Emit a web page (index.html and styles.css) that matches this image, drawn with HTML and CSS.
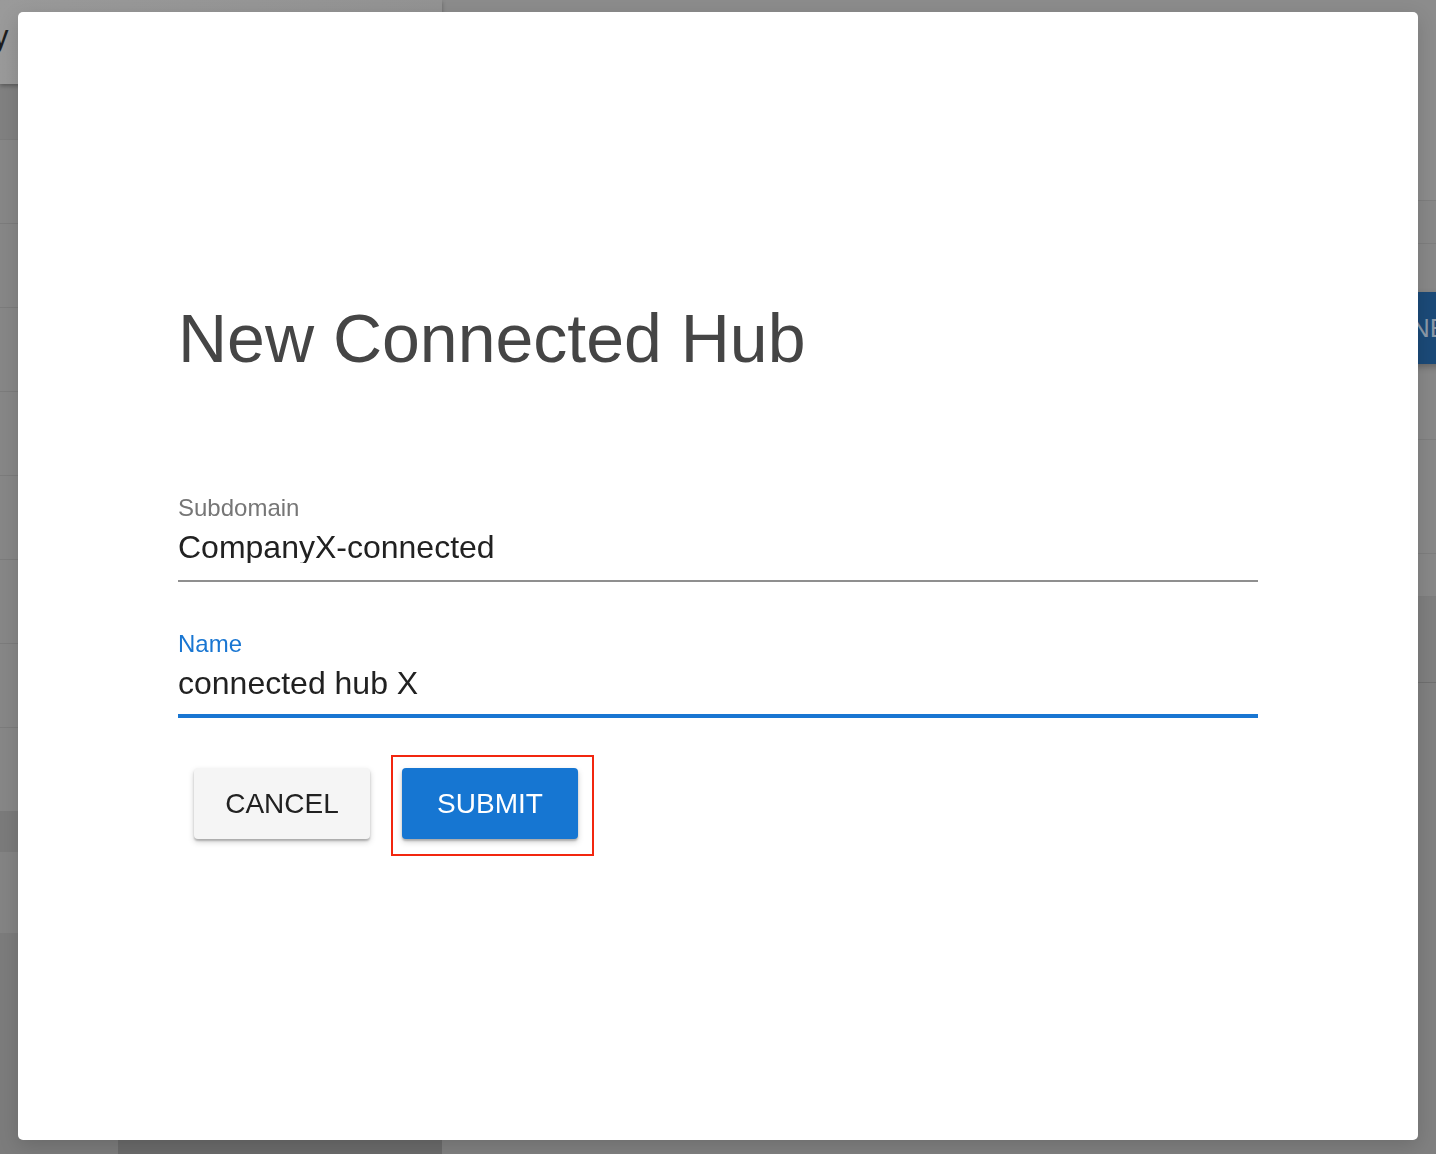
FILE: index.html
```html
<!DOCTYPE html>
<html lang="en">
<head>
  <meta charset="UTF-8">
  <title>New Connected Hub</title>
  <link rel="stylesheet" href="styles.css">
</head>
<body>

  <!-- page behind the dialog (already dimmed) -->
  <div class="page">
    <aside class="sidebar">
      <div class="sidebar-bar"><span class="sidebar-title">y</span></div>
      <div class="sidebar-head"></div>
      <div class="sidebar-row"></div>
      <div class="sidebar-row"></div>
      <div class="sidebar-row"></div>
      <div class="sidebar-row"></div>
      <div class="sidebar-row"></div>
      <div class="sidebar-row"></div>
      <div class="sidebar-row"></div>
      <div class="sidebar-row"></div>
      <div class="sidebar-band"></div>
      <div class="sidebar-band light"></div>
    </aside>

    <main class="content">
      <div class="content-top"></div>
      <div class="content-row"></div>
      <div class="content-actions">
        <button class="new-btn">NEW HUB</button>
      </div>
      <div class="content-row tall"></div>
      <div class="content-row"></div>
      <div class="content-row dark"></div>
    </main>
  </div>

  <!-- ✅ Dialog -->
  <div class="backdrop">
    <div class="dialog">
      <h1 class="dialog-title">New Connected Hub</h1>

      <form class="dialog-form">
        <label class="field">
          <span class="field-label">Subdomain</span>
          <input class="field-input" type="text" value="CompanyX-connected">
        </label>

        <label class="field is-focused">
          <span class="field-label">Name</span>
          <input class="field-input" type="text" value="connected hub X">
        </label>

        <div class="dialog-actions">
          <button type="button" class="btn btn-cancel">CANCEL</button>
          <button type="button" class="btn btn-submit">SUBMIT</button>
        </div>
      </form>
    </div>
  </div>

</body>
</html>
```

FILE: styles.css
```css
body {
  margin: 0;
  height: 100vh;
  overflow: hidden;
  font-family: "Liberation Sans", Helvetica, Arial, sans-serif;
  background: #8a8a8a;
}

/* ===== Page behind the dialog ===== */
.page {
  display: flex;
  height: 100%;
}

.sidebar {
  width: 442px;
  flex-shrink: 0;
  display: flex;
  flex-direction: column;
  background: linear-gradient(to right, #7c7c7c 118px, #6b6b6b 118px);
}

.sidebar-bar {
  height: 84px;
  background: linear-gradient(to right, #9a9a9a, #939393);
  box-shadow: 0 2px 4px rgba(0, 0, 0, 0.3);
  position: relative;
  z-index: 1;
}

.sidebar-title {
  display: block;
  margin-left: -7px;
  padding-top: 21px;
  font-size: 31px;
  line-height: 31px;
  color: #1e1e1e;
}

.sidebar-head {
  height: 55px;
  background: #818181;
}

.sidebar-row {
  height: 83px;
  background: #878787;
  border-top: 1px solid #7c7c7c;
}

.sidebar-band {
  height: 41px;
  background: #7b7b7b;
}

.sidebar-band.light {
  height: 81px;
  background: #848484;
}

.content {
  flex: 1;
  display: flex;
  flex-direction: column;
  background: #808080;
}

.content-top {
  height: 200px;
  background: #8c8c8c;
}

.content-row {
  height: 42px;
  border-top: 1px solid #7e7e7e;
  background: #888888;
}

.content-row.tall {
  height: 113px;
}

.content-row.dark {
  height: 85px;
  background: #7f7f7f;
  border-bottom: 1px solid #6f6f6f;
}

.content-actions {
  height: 195px;
  display: flex;
  justify-content: flex-end;
  background: #888888;
  border-top: 1px solid #7e7e7e;
}

.new-btn {
  width: 200px;
  height: 72px;
  margin-top: 48px;
  margin-right: -144px;
  padding: 0 0 0 31px;
  border: 0;
  border-radius: 4px;
  text-align: left;
  font-family: inherit;
  font-size: 26px;
  color: #8c9aa9;
  background: #1b4a78;
  box-shadow: 0 3px 6px rgba(0, 0, 0, 0.25);
}

/* ===== Dialog ===== */
.backdrop {
  position: fixed;
  inset: 0;
  z-index: 10;
  display: flex;
  justify-content: center;
  padding-top: 12px;
}

.dialog {
  width: 1400px;
  height: 1128px;
  box-sizing: border-box;
  padding: 292px 160px 0;
  background: #ffffff;
  border-radius: 5px;
  box-shadow: 0 6px 20px rgba(0, 0, 0, 0.15);
}

.dialog-title {
  margin: 0;
  font-size: 68px;
  line-height: 68px;
  font-weight: normal;
  color: #454545;
}

.dialog-form {
  margin-top: 124px;
  display: flex;
  flex-direction: column;
  gap: 50px;
}

.field {
  display: flex;
  flex-direction: column;
  gap: 12px;
  padding-bottom: 17px;
  border-bottom: 2px solid #8f8f8f;
}

.field-label {
  font-size: 24px;
  line-height: 23px;
  color: #767676;
}

.field-input {
  height: 32px;
  margin: 0;
  padding: 0;
  border: 0;
  outline: none;
  background: transparent;
  font-family: inherit;
  font-size: 32px;
  line-height: 32px;
  color: #212121;
}

.field.is-focused {
  padding-bottom: 15px;
  border-bottom: 4px solid #1976d2;
}

.field.is-focused .field-label {
  color: #1976d2;
}

.dialog-actions {
  display: flex;
  gap: 32px;
  padding-left: 16px;
}

.btn {
  width: 176px;
  height: 71px;
  padding: 0;
  border: 0;
  border-radius: 4px;
  font-family: inherit;
  font-size: 28px;
  box-shadow: 0 2px 2px rgba(0, 0, 0, 0.22), 0 3px 6px rgba(0, 0, 0, 0.18);
}

.btn-cancel {
  background: #f5f5f5;
  color: #212121;
}

.btn-submit {
  position: relative;
  background: #1676d2;
  color: #ffffff;
}

/* red highlight drawn round the submit button */
.btn-submit::after {
  content: "";
  position: absolute;
  left: -11px;
  top: -13px;
  right: -16px;
  bottom: -17px;
  border: 2px solid #f2260f;
}
```
